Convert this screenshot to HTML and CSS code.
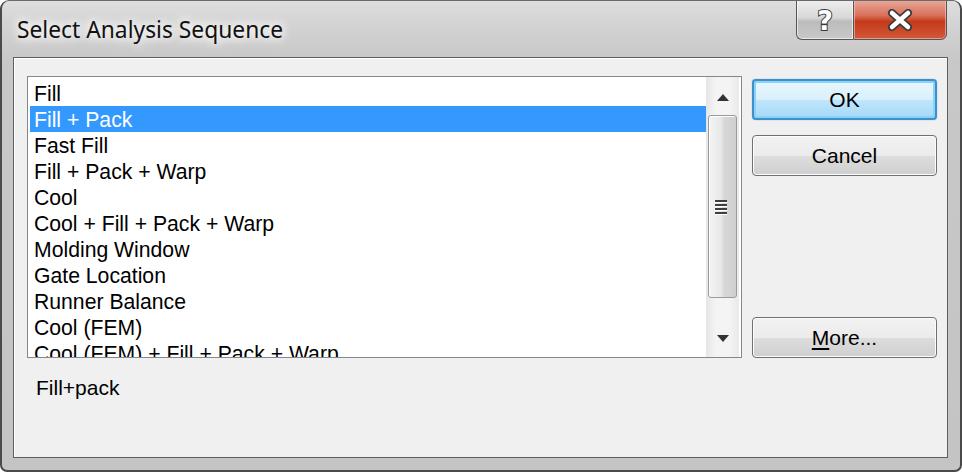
FILE: index.html
```html
<!DOCTYPE html>
<html>
<head>
<meta charset="utf-8">
<link rel="stylesheet" href="styles.css">
</head>
<body>
<div class="window">
  <div class="titlebar">
    <div class="title">Select Analysis Sequence</div>
    <div class="caption-btns">
      <div class="cap help"><span>?</span></div>
      <div class="cap close">
        <svg width="28" height="22" viewBox="0 0 28 22">
          <path d="M6 4 L22 18 M22 4 L6 18" stroke="#3b3b3b" stroke-width="8" stroke-linecap="round"/>
          <path d="M6 4 L22 18 M22 4 L6 18" stroke="#ffffff" stroke-width="4.5" stroke-linecap="round"/>
        </svg>
      </div>
    </div>
  </div>
  <div class="client">
    <div class="main-row">
      <div class="listbox">
        <div class="items">
          <div class="item">Fill</div>
          <div class="item selected">Fill + Pack</div>
          <div class="item">Fast Fill</div>
          <div class="item">Fill + Pack + Warp</div>
          <div class="item">Cool</div>
          <div class="item">Cool + Fill + Pack + Warp</div>
          <div class="item">Molding Window</div>
          <div class="item">Gate Location</div>
          <div class="item">Runner Balance</div>
          <div class="item">Cool (FEM)</div>
          <div class="item">Cool (FEM) + Fill + Pack + Warp</div>
        </div>
        <div class="scrollbar">
          <div class="arrow up"><svg width="12" height="7" viewBox="0 0 12 7"><path d="M0 7 L6 0 L12 7 Z" fill="#333"/></svg></div>
          <div class="thumb">
            <div class="grip"><i></i><i></i><i></i><i></i></div>
          </div>
          <div class="arrow down"><svg width="12" height="7" viewBox="0 0 12 7"><path d="M0 0 L6 7 L12 0 Z" fill="#333"/></svg></div>
        </div>
      </div>
      <div class="buttons">
        <div class="btn default">OK</div>
        <div class="btn">Cancel</div>
        <div class="spacer"></div>
        <div class="btn"><span class="u">M</span>ore...</div>
      </div>
    </div>
    <div class="desc">Fill+pack</div>
  </div>
</div>
</body>
</html>
```
FILE: styles.css
```css
html, body {
  margin: 0;
  padding: 0;
  background: #ffffff;
}
.window {
  box-sizing: border-box;
  width: 962px;
  height: 472px;
  border: 2px solid #4a4a4a;
  border-top: 1px solid #6a6a6a;
  border-radius: 9px 9px 7px 7px;
  background: linear-gradient(#dedede 0px, #d0d0d0 30px, #c8c8c8 60px, #c4c4c4 100%);
  display: flex;
  flex-direction: column;
  overflow: hidden;
}
.titlebar {
  height: 56px;
  display: flex;
  align-items: flex-start;
  flex-shrink: 0;
}
.title {
  font-family: "Noto Sans", "Open Sans", sans-serif;
  font-size: 22.8px;
  color: #111;
  padding: 13px 0 0 15px;
  text-shadow: 0 0 8px #ffffff, 0 0 12px #ffffff, 0 0 16px #ffffff;
}
.caption-btns {
  margin-left: auto;
  margin-right: 13px;
  display: flex;
  margin-top: -2px;
}
.cap {
  height: 41px;
  box-sizing: border-box;
  border: 1px solid #555;
  display: flex;
  align-items: center;
  justify-content: center;
}
.help {
  width: 57px;
  border-radius: 0 0 0 6px;
  border-right: none;
  background: linear-gradient(#eeeeee 0%, #d8d8d8 45%, #bcbcbc 55%, #c8c8c8 100%);
  box-shadow: inset 0 0 0 1px rgba(255,255,255,0.6);
}
.help span {
  font-family: "DejaVu Sans", sans-serif;
  font-weight: bold;
  font-size: 27px;
  line-height: 30px;
  color: #ffffff;
  -webkit-text-stroke: 2px #3a3a3a;
  paint-order: stroke fill;
  margin-top: 2px;
}
.close {
  width: 94px;
  border-radius: 0 0 6px 0;
  background: linear-gradient(#e9a99a 0%, #d9705a 40%, #c4391a 55%, #d2593a 100%);
  box-shadow: inset 0 0 0 1px rgba(255,220,210,0.5);
}
.client {
  flex: 1;
  margin: 0 12px 12px 11px;
  border: 1px solid #5e5e5e;
  box-shadow: inset 1px 1px 0 #ffffff;
  background: #f0f0f0;
  padding: 18px 10px 0 13px;
  display: flex;
  flex-direction: column;
}
.main-row {
  display: flex;
  gap: 10px;
}
.listbox {
  box-sizing: border-box;
  width: 715px;
  height: 282px;
  border: 1px solid #828790;
  background: #ffffff;
  display: flex;
  padding: 3px 2px 0 2px;
  overflow: hidden;
}
.items {
  flex: 1;
  overflow: hidden;
}
.item {
  height: 26px;
  line-height: 27px;
  font-family: "Liberation Sans", Arial, sans-serif;
  font-size: 21.2px;
  color: #000;
  padding-left: 4px;
  white-space: nowrap;
}
.item.selected {
  background: #3399ff;
  color: #ffffff;
}
.scrollbar {
  width: 33px;
  margin-top: -3px;
  height: 280px;
  display: flex;
  flex-direction: column;
  align-items: center;
  background: linear-gradient(90deg, #e6e6e6, #f4f4f4 30%, #f4f4f4 70%, #e9e9e9);
}
.arrow {
  width: 100%;
  display: flex;
  justify-content: center;
  box-sizing: border-box;
}
.arrow.up { height: 38px; align-items: center; padding-top: 2px; }
.arrow.down { height: 59px; align-items: flex-end; padding-bottom: 15px; }
.thumb {
  box-sizing: border-box;
  width: 29px;
  height: 183px;
  border: 1px solid #9b9b9b;
  border-radius: 3px;
  background: linear-gradient(90deg, #f4f4f4 0%, #e8e8e8 45%, #d8d8d8 55%, #cfcfcf 100%);
  box-shadow: inset 1px 1px 0 #fdfdfd;
  display: flex;
  align-items: center;
  justify-content: center;
}
.grip {
  display: flex;
  flex-direction: column;
  gap: 1px;
  margin-top: 2px;
  margin-right: 4px;
}
.grip i {
  display: block;
  width: 12px;
  height: 2px;
  background: #3f3f3f;
  border-bottom: 1px solid #ffffff;
}
.buttons {
  width: 185px;
  display: flex;
  flex-direction: column;
  padding-top: 3px;
}
.spacer { flex: 1; }
.btn {
  box-sizing: border-box;
  height: 41px;
  border: 1px solid #707070;
  border-radius: 4px;
  background: linear-gradient(#f2f2f2 0%, #ebebeb 50%, #dddddd 51%, #cfcfcf 100%);
  box-shadow: inset 0 0 0 1px #fcfcfc;
  font-family: "Liberation Sans", Arial, sans-serif;
  font-size: 21px;
  color: #000;
  display: flex;
  align-items: center;
  justify-content: center;
  margin-bottom: 15px;
}
.btn:last-child { margin-bottom: 0; }
.btn.default {
  border: 2px solid #3c8fd0;
  background: linear-gradient(#eaf6fd 0%, #d9f0fc 50%, #bee6fd 51%, #a7d9f5 100%);
  box-shadow: inset 0 0 0 2px #8ad3f7, 0 0 1px #3c7fb1;
}
.u { text-decoration: underline; text-underline-offset: 3px; }
.desc {
  font-family: "Liberation Sans", Arial, sans-serif;
  font-size: 21px;
  color: #000;
  padding: 18px 0 0 9px;
}
```
